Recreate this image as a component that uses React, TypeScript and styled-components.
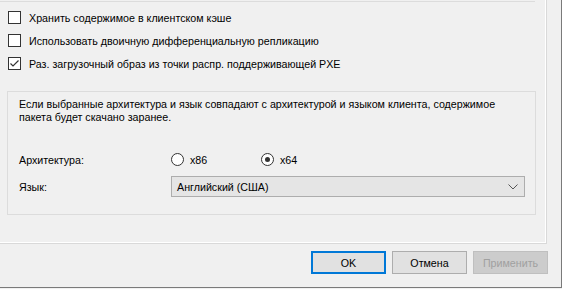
import React, { useState } from 'react';
import styled, { createGlobalStyle } from 'styled-components';

const GlobalStyle = createGlobalStyle`
  html, body {
    margin: 0;
    padding: 0;
    background: #f0f0f0;
  }
  body {
    font-family: "Liberation Sans", Arial, sans-serif;
    font-size: 10.7px;
    color: #000000;
  }
`;

const Dialog = styled.div`
  width: 561px;
  height: 287px;
  background: #f0f0f0;
  border-right: 1px solid #7a7a7a;
  border-bottom: 1px solid #7a7a7a;
  display: flex;
  flex-direction: column;
`;

const TabPage = styled.div`
  width: 547px;
  height: 244px;
  box-sizing: border-box;
  border-right: 1px solid #d9d9d9;
  border-bottom: 1px solid #d9d9d9;
  box-shadow: inset -1px -1px 0 #ffffff;
  padding-left: 8px;
  display: flex;
  flex-direction: column;
`;

const TopRule = styled.div`
  margin: 1px 0 0 -8px;
  width: 535px;
  height: 1px;
  background: #dcdcdc;
`;

const CheckList = styled.div`
  display: flex;
  flex-direction: column;
  gap: 10px;
  margin-top: 9px;
`;

const CheckRow = styled.label`
  display: flex;
  align-items: center;
  gap: 8px;
  height: 13px;
  white-space: nowrap;
`;

const Box = styled.span`
  width: 11px;
  height: 11px;
  border: 1px solid #333333;
  background: #ffffff;
  display: flex;
  align-items: center;
  justify-content: center;
  flex: none;
`;

const GroupBox = styled.div`
  margin: 21px 0 0 -1px;
  width: 529px;
  height: 124px;
  box-sizing: border-box;
  border: 1px solid #dcdcdc;
  padding: 6px 0 0 11px;
  display: flex;
  flex-direction: column;
`;

const Note = styled.p`
  margin: 0;
  line-height: 13px;
  width: 490px;
`;

const FieldRow = styled.div<{ $h: number; $mt: number }>`
  display: flex;
  align-items: center;
  height: ${p => p.$h}px;
  margin-top: ${p => p.$mt}px;
`;

const FieldLabel = styled.span`
  width: 152px;
  flex: none;
`;

const RadioOption = styled.label`
  display: flex;
  align-items: center;
  gap: 6px;
  width: 90px;
`;

const Circle = styled.span`
  width: 11px;
  height: 11px;
  border-radius: 50%;
  border: 1px solid #333333;
  background: #ffffff;
  display: flex;
  align-items: center;
  justify-content: center;
  flex: none;
`;

const Dot = styled.span`
  width: 5px;
  height: 5px;
  border-radius: 50%;
  background: #333333;
`;

const Combo = styled.div`
  width: 354px;
  height: 21px;
  box-sizing: border-box;
  border: 1px solid #adadad;
  background: #e5e5e5;
  display: flex;
  align-items: center;
  justify-content: space-between;
  padding: 0 6px 0 5px;
`;

const Footer = styled.div`
  display: flex;
  justify-content: flex-end;
  gap: 6px;
  padding: 7px 13px 0 0;
`;

const Button = styled.button<{ $primary?: boolean }>`
  width: 75px;
  height: 23px;
  box-sizing: border-box;
  font-family: inherit;
  font-size: 10.7px;
  padding: 0;
  background: ${p => (p.disabled ? '#cccccc' : '#e1e1e1')};
  color: ${p => (p.disabled ? '#a0a0a0' : '#000000')};
  border: ${p => (p.$primary ? '2px solid #0078d7' : p.disabled ? '1px solid #bfbfbf' : '1px solid #adadad')};
`;

function Check({ checked, children }: { checked?: boolean; children: React.ReactNode }) {
  return (
    <CheckRow>
      <Box>
        {checked && (
          <svg width="11" height="11" viewBox="0 0 11 11">
            <path d="M1.5 5.5 L4 8 L9.5 2.5" fill="none" stroke="#333" strokeWidth="1.2" />
          </svg>
        )}
      </Box>
      {children}
    </CheckRow>
  );
}

export default function App() {
  const [arch, setArch] = useState<'x86' | 'x64'>('x64');

  return (
    <>
      <GlobalStyle />
      <Dialog>
        <TabPage>
          <TopRule />
          <CheckList>
            <Check>Хранить содержимое в клиентском кэше</Check>
            <Check>Использовать двоичную дифференциальную репликацию</Check>
            <Check checked>Раз. загрузочный образ из точки распр. поддерживающей PXE</Check>
          </CheckList>
          <GroupBox>
            <Note>
              Если выбранные архитектура и язык совпадают с архитектурой и языком клиента, содержимое
              пакета будет скачано заранее.
            </Note>
            <FieldRow $h={13} $mt={29}>
              <FieldLabel>Архитектура:</FieldLabel>
              {(['x86', 'x64'] as const).map(a => (
                <RadioOption key={a} onClick={() => setArch(a)}>
                  <Circle>{arch === a && <Dot />}</Circle>
                  {a}
                </RadioOption>
              ))}
            </FieldRow>
            <FieldRow $h={21} $mt={10}>
              <FieldLabel>Язык:</FieldLabel>
              <Combo>
                <span>Английский (США)</span>
                <svg width="10" height="6" viewBox="0 0 10 6">
                  <path d="M0.5 0.5 L5 5 L9.5 0.5" fill="none" stroke="#555" strokeWidth="1" />
                </svg>
              </Combo>
            </FieldRow>
          </GroupBox>
        </TabPage>
        <Footer>
          <Button $primary>OK</Button>
          <Button>Отмена</Button>
          <Button disabled>Применить</Button>
        </Footer>
      </Dialog>
    </>
  );
}
